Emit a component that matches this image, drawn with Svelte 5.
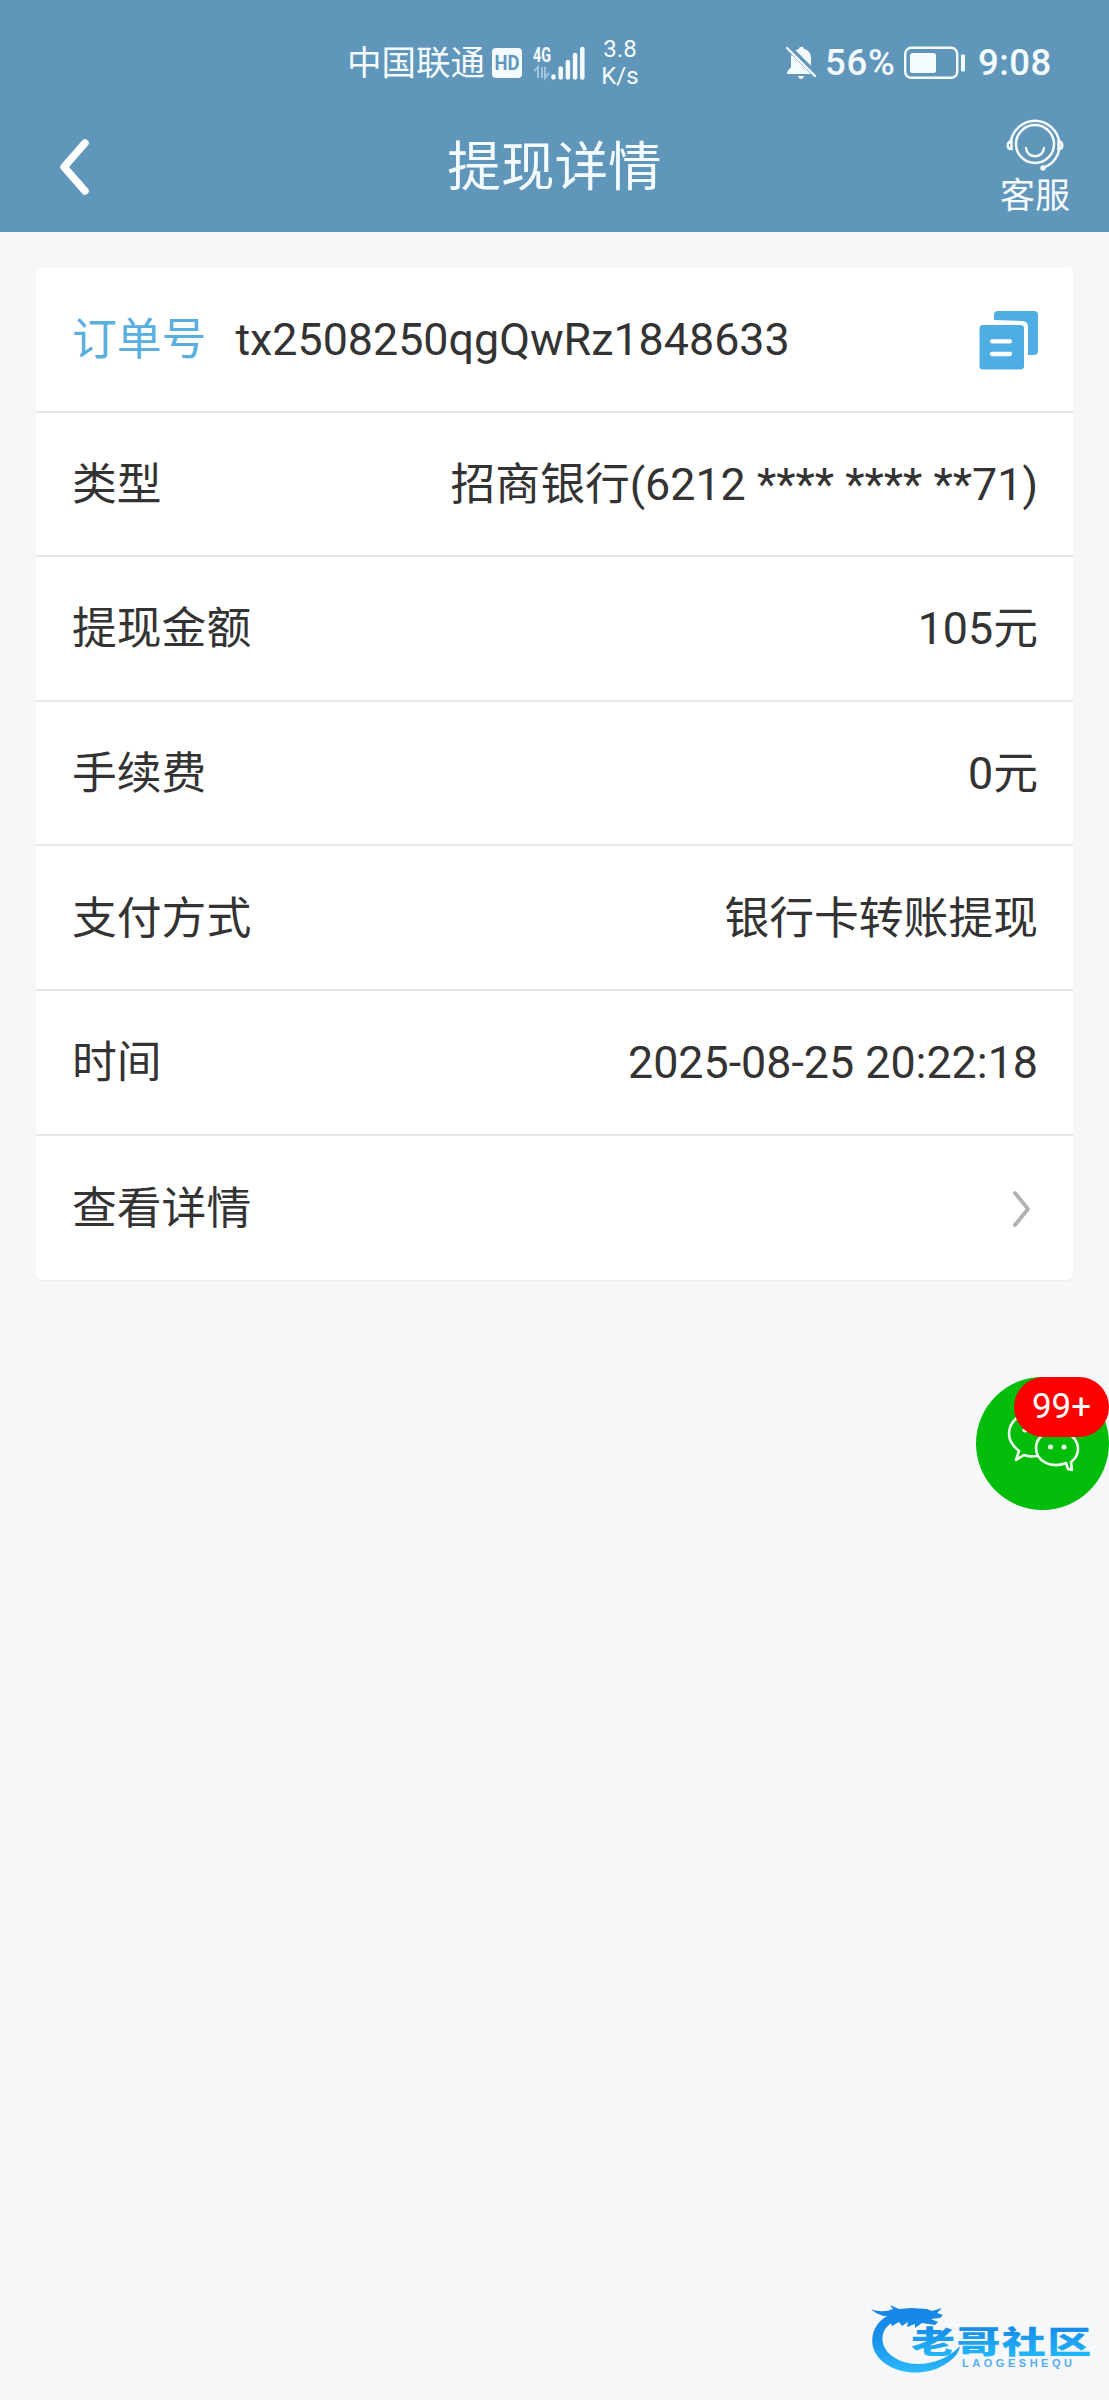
<script>
	// Withdrawal detail page
	const order = 'tx2508250qgQwRz1848633';

	const rows = [
		{ label: '类型', value: '招商银行(6212 **** **** **71)' },
		{ label: '提现金额', value: '105元' },
		{ label: '手续费', value: '0元' },
		{ label: '支付方式', value: '银行卡转账提现' },
		{ label: '时间', value: '2025-08-25 20:22:18' }
	];
</script>

<div class="page">
	<header>
		<div class="status-bar">
			<span class="carrier">中国联通</span>
			<svg class="hd" viewBox="0 0 30 30">
				<rect width="30" height="30" rx="4" fill="#f4fbff" />
				<text x="15" y="22.3" text-anchor="middle" textLength="25" lengthAdjust="spacingAndGlyphs">HD</text>
			</svg>
			<svg class="signal" viewBox="0 0 54 40">
				<text x="0" y="19" textLength="18" lengthAdjust="spacingAndGlyphs">4G</text>
				<path class="traffic" d="M1 28l4-4v11M9 24v11M12 24v11l4-5" />
				<path class="bars" d="M20.5 33.5v1M27.7 25.500v9M34.9 19v15.500M42.1 12v22.500M49.3 6v28.500" />
			</svg>
			<div class="speed">
				<span>3.8</span>
				<span>K/s</span>
			</div>
			<svg class="bell" viewBox="0 0 32 36">
				<path d="M13 4c0-3 5-3 5 0 5 1 7 5 7 9v8l4 6v2H1v-2l4-5v-9c0-4 3-8 8-9zM12 31h6c-1 4-5 4-6 0z" fill="#f4fbff" />
				<path d="M2 2l29 29" stroke="#6096ba" stroke-width="6" />
				<path d="M1 3l28 28" stroke="#f4fbff" stroke-width="2.4" stroke-linecap="round" />
			</svg>
			<span class="percent">56%</span>
			<svg class="battery" viewBox="0 0 62 34">
				<rect x="1.2" y="1.8" width="52" height="30" rx="6" fill="none" stroke="#f4fbff" stroke-width="2.4" />
				<rect x="6" y="7" width="26" height="20" rx="2.5" fill="#f4fbff" />
				<rect x="57" y="8.5" width="4" height="17" rx="1" fill="#f4fbff" />
			</svg>
			<span class="clock">9:08</span>
		</div>
		<nav>
			<svg class="back" viewBox="0 0 30 56">
				<path d="M25 4L4 28l21 24" />
			</svg>
			<h1>提现详情</h1>
			<div class="service">
				<svg viewBox="0 0 60 56">
					<circle cx="30" cy="28" r="19" />
					<path d="M21 32c1 11 17 11 18 0" />
					<path d="M5.500 27A24.700 25.500 0 0 1 54.500 27C55 38 49 49 38 51.500" />
					<path d="M6.500 25c-5 1-5 8 0 8zM53.500 25c5 1 5 8 0 8z" />
					<circle class="mic" cx="38" cy="52" r="2.700" />
				</svg>
				<span>客服</span>
			</div>
		</nav>
	</header>

	<main>
		<div class="row">
			<span class="order-label">订单号</span>
			<span class="order-number">{order}</span>
			<svg class="copy" viewBox="0 0 60 60">
				<path d="M15 10V5q0-4 4-4H55q4 0 4 4V41q0 4-4 4H49V17q0-6-6-6z" />
				<rect x="0.500" y="15" width="44.500" height="44.500" rx="3.500" />
				<path class="lines" d="M13 31.300H31M13 44H31" />
			</svg>
		</div>
		{#each rows as row}
			<div class="row">
				<span>{row.label}</span>
				<span class="value">{row.value}</span>
			</div>
		{/each}
		<div class="row">
			<span>查看详情</span>
			<svg class="arrow" viewBox="0 0 20 38">
				<path d="M3 3l13 16L3 35" />
			</svg>
		</div>
	</main>

	<!-- Floating chat button -->
	<div class="chat">
		<svg viewBox="0 0 133 133">
			<path d="M61 79q-9 1-13-1l-8 5 3-9Q33 66 33 57C33 30 82 24 88 54" />
			<path d="M92 92l-2-6c-15 6-30-2-30-15 0-10 9-17 21-17s21 8 21 18c0 6-3 10-7 13l1 8z" />
			<circle cx="49" cy="53" r="2.500" />
			<circle cx="74.500" cy="70" r="2.500" />
			<circle cx="88" cy="70" r="2.500" />
		</svg>
		<span class="badge">99+</span>
	</div>

	<svg class="watermark" viewBox="0 0 249 100">
		<defs>
			<linearGradient id="water" x1="0" y1="15" x2="0" y2="82" gradientUnits="userSpaceOnUse">
				<stop offset="0" stop-color="#1685e8" />
				<stop offset="0.450" stop-color="#168eea" />
				<stop offset="1" stop-color="#29b8fa" />
			</linearGradient>
			<linearGradient id="name" x1="0" y1="-27" x2="0" y2="2" gradientUnits="userSpaceOnUse">
				<stop offset="0" stop-color="#168ae8" />
				<stop offset="1" stop-color="#22b4f8" />
			</linearGradient>
		</defs>
		<g fill="url(#water)">
			<path d="M34 23C17 29 10 42 13 57c6 23 44 34 71 18 10-6 15-12 16-19-11 13-34 21-52 17C30 69 20 57 23 44c2-8 10-13 20-17z" />
			<path d="M11 19c7 3 15 3 22 0l-3-4 9 4 12-1 16 1 5 2 10-3-5 5 6 2-3 3-9 1 7 3-3 3-7-1-6-1-7 5v-4l-8 3 1-5-6 4-3-4-7 4-2-4c-5 1-6-3-1-6C24 27 16 24 11 19z" />
		</g>
		<text class="name" fill="url(#name)" transform="translate(51 63) scale(1.420 1)" textLength="127" lengthAdjust="spacing">老哥社区</text>
		<text class="latin" x="102" y="77" textLength="110">LAOGESHEQU</text>
	</svg>
</div>

<style>
	:global(body) {
		margin: 0;
		background: #f6f7f9;
	}

	.page {
		position: relative;
		height: 2400px;
		overflow: hidden;
		font-family: Roboto, 'Noto Sans CJK SC', sans-serif;
		font-size: 44.800px;
		color: #333;
	}

	svg {
		display: block;
		flex: none;
	}

	header {
		height: 232px;
		background: #6096ba;
		color: #f4fbff;
	}

	.status-bar {
		display: flex;
		align-items: center;
		height: 101px;
		padding: 25px 50px 0 347px;
		box-sizing: border-box;
	}

	.status-bar span {
		white-space: nowrap;
	}

	.carrier {
		font-size: 34.500px;
		line-height: 40px;
		width: 145px;
	}

	.hd {
		width: 30px;
		height: 30px;
		margin-right: 11px;
	}

	.hd text {
		font-size: 20px;
		font-weight: 700;
		fill: #6096ba;
	}

	.signal {
		width: 54px;
		height: 40px;
	}

	.signal text {
		font-size: 20px;
		font-weight: 700;
		fill: #f4fbff;
	}

	.traffic {
		fill: none;
		stroke: #a1c4dc;
		stroke-width: 2;
	}

	.bars {
		stroke: #f4fbff;
		stroke-width: 4.500;
		stroke-linecap: round;
	}

	.speed {
		display: flex;
		flex-direction: column;
		align-items: center;
		width: 40px;
		margin-left: 13px;
		font-size: 24px;
		line-height: 27px;
	}

	.bell {
		width: 32px;
		height: 36px;
		margin-left: 146px;
	}

	.percent {
		width: 79px;
		margin-left: 7px;
		font-size: 36.500px;
		font-weight: 500;
		line-height: 40px;
		letter-spacing: 0.800px;
	}

	.battery {
		width: 62px;
		height: 34px;
	}

	.clock {
		margin-left: 12px;
		font-size: 36.500px;
		font-weight: 500;
		line-height: 40px;
		letter-spacing: 0.500px;
	}

	nav {
		display: grid;
		grid-template-columns: 1fr auto 1fr;
		height: 131px;
	}

	.back {
		width: 30px;
		height: 56px;
		margin: 38px 0 0 60px;
		fill: none;
		stroke: #fff;
		stroke-width: 7.500;
		stroke-linecap: round;
		stroke-linejoin: round;
	}

	h1 {
		margin: 0;
		font-size: 53.600px;
		font-weight: 400;
		line-height: 133px;
	}

	.service {
		display: flex;
		flex-direction: column;
		align-items: center;
		justify-self: end;
		width: 70px;
		margin: 15px 39px 0 0;
		font-size: 35px;
		line-height: 40px;
	}

	.service svg {
		width: 60px;
		height: 56px;
		fill: none;
		stroke: #f4fbff;
		stroke-width: 2.500;
		stroke-linecap: round;
	}

	.service .mic {
		fill: #f4fbff;
		stroke: none;
	}

	.service span {
		margin-top: 5px;
	}

	main {
		margin: 36px 36px 0;
		background: #fff;
		border-radius: 6px;
		box-shadow: 0 1px 1px #ececee;
	}

	.row {
		display: flex;
		align-items: center;
		box-sizing: border-box;
		height: 144.600px;
		padding: 2px 35px 0 36px;
		border-bottom: 2px solid #e6e6e6;
		line-height: 64px;
	}

	.row:last-child {
		border-bottom: 0;
	}

	.order-label {
		color: #58afe0;
	}

	.order-number {
		margin-left: 29px;
	}

	.value {
		margin-left: auto;
	}

	.copy {
		width: 60px;
		height: 60px;
		margin: 0 -1px 0 auto;
		fill: #4eaee4;
	}

	.copy .lines {
		stroke: #fff;
		stroke-width: 4.300;
		stroke-linecap: round;
	}

	.arrow {
		width: 20px;
		height: 38px;
		margin: 0 6px 0 auto;
		fill: none;
		stroke: #b2b2b2;
		stroke-width: 3.800;
		stroke-linecap: round;
		stroke-linejoin: round;
	}

	.chat {
		position: absolute;
		top: 1377px;
		right: 0;
		width: 133px;
		height: 133px;
		border-radius: 50%;
		background: #03bd0b;
	}

	.chat svg {
		width: 133px;
		height: 133px;
		fill: none;
		stroke: #f0fff0;
		stroke-width: 2.600;
		stroke-linejoin: round;
	}

	.chat circle {
		fill: #f0fff0;
		stroke: none;
	}

	.badge {
		position: absolute;
		top: 0;
		right: 0;
		width: 95px;
		height: 60px;
		border-radius: 30px;
		background: #f00;
		color: #fff;
		font-size: 35px;
		line-height: 59px;
		text-align: center;
	}

	.watermark {
		position: absolute;
		top: 2290px;
		right: 0;
		width: 249px;
		height: 100px;
	}

	.name {
		font-family: 'Noto Sans CJK SC', sans-serif;
		font-size: 31px;
		font-weight: 900;
	}

	.latin {
		font-family: 'Liberation Sans', sans-serif;
		font-size: 11px;
		font-weight: 700;
		fill: #55aef0;
	}
</style>
